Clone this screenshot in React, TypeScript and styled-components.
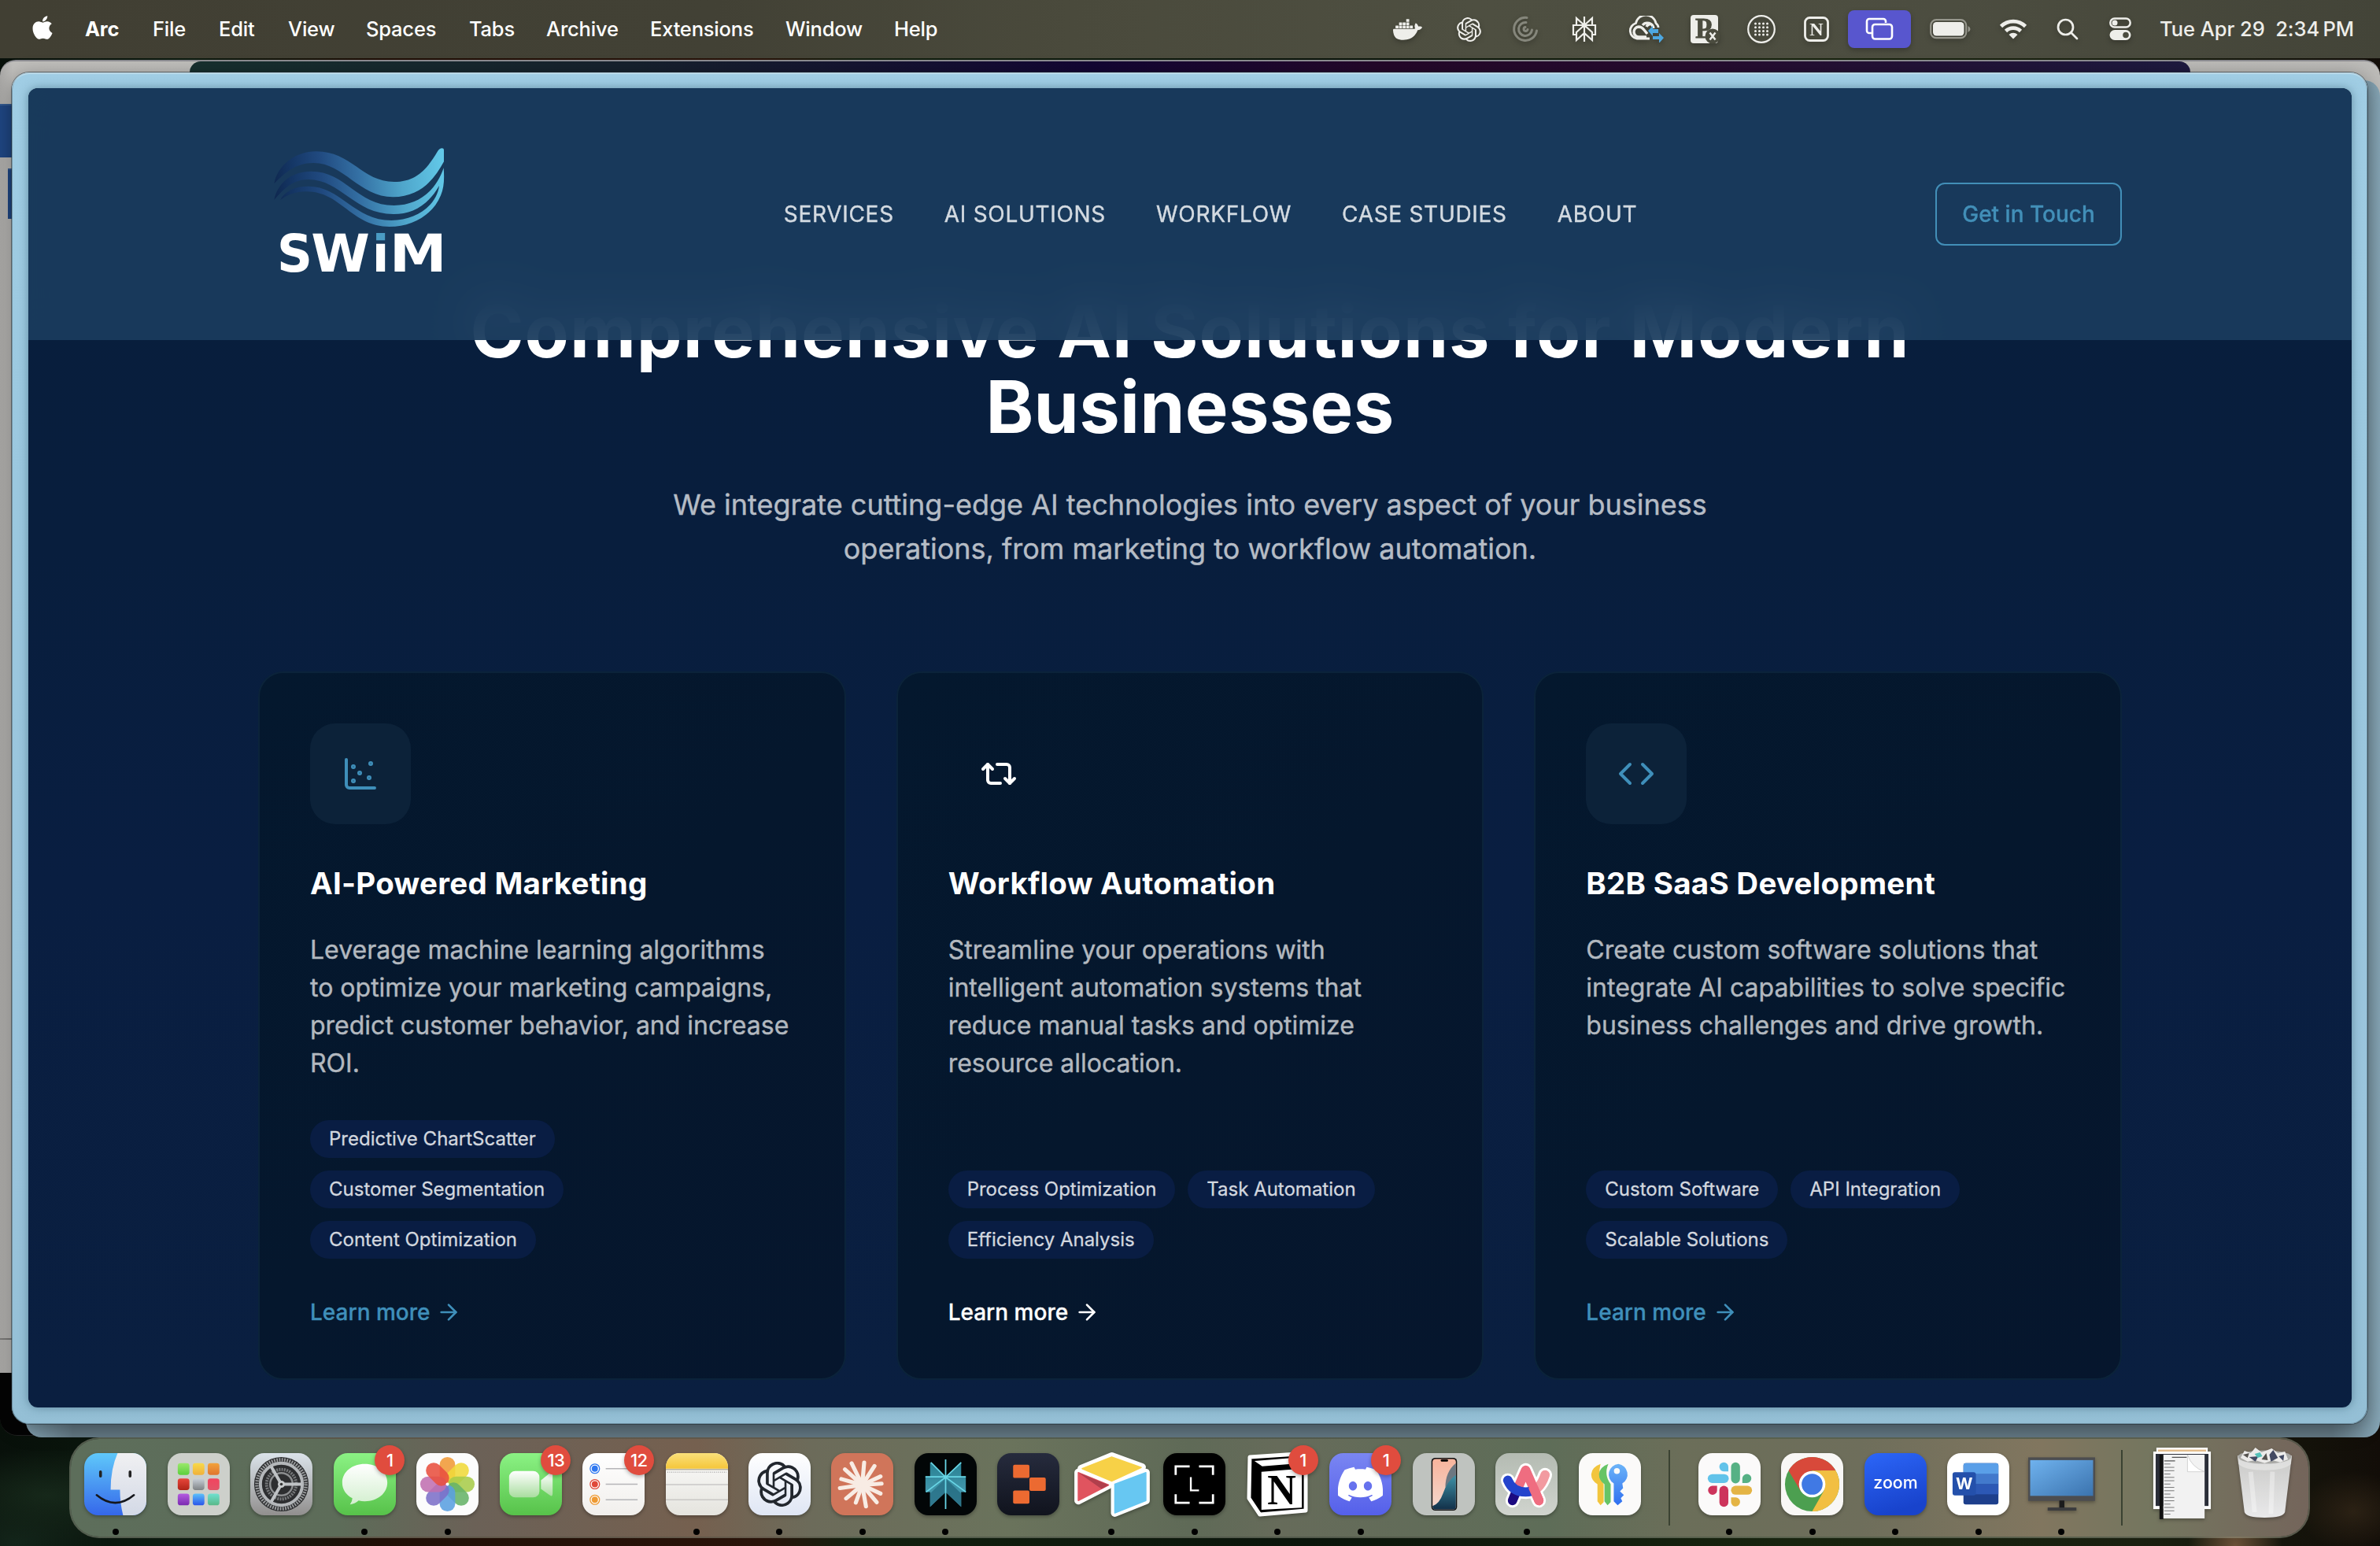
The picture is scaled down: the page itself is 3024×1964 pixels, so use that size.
import React from "react";
import styled, { createGlobalStyle } from "styled-components";
import { ArrowRight, ChartScatter, Code, Repeat2 } from "lucide-react";
import { FaApple } from "react-icons/fa";
import { SiDiscord, SiDocker, SiOpenai } from "react-icons/si";

const Global = createGlobalStyle`
  *, *::before, *::after { box-sizing: border-box; }
  html, body { margin: 0; padding: 0; background: #0b0f0a; }
  body { font-family: Inter, "Liberation Sans", sans-serif; width: 3024px; height: 1964px; overflow: hidden; }
`;

const Desktop = styled.div`
  position: relative;
  width: 3024px;
  height: 1964px;
  overflow: hidden;
  background:
    radial-gradient(ellipse 60px 70px at 2840px 1964px, #6b5138 0%, transparent 100%),
    radial-gradient(ellipse 160px 60px at 60px 1900px, #16281a 0%, transparent 100%),
    radial-gradient(ellipse 120px 60px at 20px 1960px, #13251a 0%, transparent 100%),
    radial-gradient(ellipse 70px 50px at 2990px 1920px, #2b2114 0%, transparent 100%),
    linear-gradient(90deg, #08100a 0%, #0d1c10 8%, #200f06 16%, #2a140a 32%, #12200f 36%, #0b150b 55%, #18240f 75%, #1a2010 90%, #120d08 100%);
`;

const MenuBar = styled.header`
  display: flex;
  align-items: center;
  width: 100%;
  height: 74px;
  padding: 0 33px 0 37px;
  color: #fff;
  background: linear-gradient(90deg, #413f33 0%, #424135 30%, #4a4a3c 45%, #4e4f41 62%, #4c4d40 82%, #434438 100%);
`;

const AppleMark = styled(FaApple)`
  flex: none;
  margin-top: -5px;
`;

const MenuItems = styled.nav`
  display: flex;
  align-items: center;
  gap: 43px;
  margin-left: 37px;
  flex: 1;
`;

const MenuItem = styled.span<{ $w: number; $bold?: boolean }>`
  width: ${(p) => p.$w}px;
  white-space: nowrap;
  font-size: 25.5px;
  line-height: 32px;
  font-weight: ${(p) => (p.$bold ? 700 : 500)};
  letter-spacing: -0.2px;
`;

const Status = styled.div`
  display: flex;
  align-items: center;
  color: #eeeeea;
`;

const StatusSlot = styled.span<{ $w: number }>`
  display: flex;
  align-items: center;
  justify-content: center;
  width: ${(p) => p.$w}px;
  height: 74px;
  filter: drop-shadow(0 3px 3px rgba(0, 0, 0, 0.25));
`;

const ScreenPill = styled.span`
  display: flex;
  align-items: center;
  justify-content: center;
  width: 80px;
  height: 48px;
  border-radius: 8px;
  background: #5856ce;
`;

const Clock = styled.time`
  width: 247px;
  margin-left: 20px;
  white-space: pre;
  font-size: 25.5px;
  line-height: 32px;
  font-weight: 500;
  letter-spacing: -0.05px;
`;

const GreyWindow = styled.div`
  position: absolute;
  left: 0;
  top: 76px;
  width: 3024px;
  height: 1668px;
  border-radius: 20px 20px 0 0;
  border-top: 2px solid #8d8d92;
  background: linear-gradient(90deg, #a9a8a6 0, #c0bfbc 16px, #bdbcb9 100%);
  display: flex;
  justify-content: center;
`;

const GreyTabStrip = styled.div`
  width: 2542px;
  height: 40px;
  border-radius: 14px 14px 0 0;
  background: linear-gradient(90deg, #17302f 0%, #17222e 22%, #130634 45%, #25082a 60%, #270c30 75%, #1e1a40 100%);
`;

const SideMark = styled.div<{ $x: number; $y: number; $h: number }>`
  position: absolute;
  left: ${(p) => p.$x}px;
  top: ${(p) => p.$y}px;
  width: 40px;
  height: ${(p) => p.$h}px;
  background: #1f4683;
  border-top: 2px solid #335a90;
`;

const SideRule = styled.div`
  position: absolute;
  left: 0;
  top: 1700px;
  width: 20px;
  height: 2px;
  background: #7b7a78;
`;

const BlackWindow = styled.div`
  position: absolute;
  left: 0;
  top: 1744px;
  width: 400px;
  height: 80px;
  border-radius: 0 0 0 22px;
  background: #040404;
  border-bottom: 1px solid #222;
`;

const RearWindow = styled.div`
  position: absolute;
  left: 33px;
  top: 102px;
  width: 2991px;
  height: 1724px;
  border-radius: 20px;
  background: linear-gradient(90deg, #86a6b6 0, #667c88 60px, #667c88 2930px, #86a6b6 100%);
`;

const ArcWindow = styled.main`
  position: absolute;
  left: 15px;
  top: 92px;
  width: 2993px;
  height: 1717px;
  padding: 20px 20px 21px 21px;
  border-radius: 22px;
  background: linear-gradient(180deg, #a0cde4 0%, #9bc8df 30%, #9ac4dc 80%, #94bfd5 100%);
  box-shadow: inset 0 2px 1px rgba(220, 240, 250, 0.55), inset 0 0 0 1px rgba(90, 120, 135, 0.7), 0 0 0 1px rgba(30, 40, 45, 0.5), 0 6px 26px rgba(0, 0, 0, 0.4);
`;

const Page = styled.div`
  position: relative;
  width: 2952px;
  height: 1676px;
  border-radius: 12px;
  overflow: hidden;
  background: linear-gradient(180deg, #081e3c 0%, #081e3d 35%, #091e41 60%, #0a1f40 100%);
  box-shadow: 0 0 12px rgba(40, 80, 100, 0.5);
`;

const SiteHeader = styled.div`
  position: absolute;
  z-index: 2;
  left: 0;
  top: 0;
  width: 100%;
  height: 320px;
  padding: 0 292px;
  display: flex;
  align-items: center;
  justify-content: space-between;
  background: rgba(26, 61, 95, 0.91);
  backdrop-filter: blur(28px);
`;

const SiteNav = styled.nav`
  display: flex;
  gap: 64px;
  padding-left: 2px;
`;

const NavLink = styled.a`
  font-size: 28px;
  line-height: 40px;
  letter-spacing: 0.7px;
  color: #d3dae1;
  -webkit-text-stroke: 0.4px currentColor;
  white-space: nowrap;
`;

const TouchButton = styled.button`
  width: 237px;
  height: 80px;
  padding: 0;
  border: 2px solid #428fb8;
  border-radius: 12px;
  background: transparent;
  color: #428fb8;
  font: 500 28px/40px Inter, "Liberation Sans", sans-serif;
  -webkit-text-stroke: 0.3px currentColor;
`;

const Section = styled.section`
  display: flex;
  flex-direction: column;
  align-items: center;
  padding: 261px 292px 0;
`;

const Headline = styled.h2`
  margin: 0;
  text-align: center;
  color: #fff;
  font-size: 92px;
  line-height: 96px;
  font-weight: 700;
`;

const HeadlineRow = styled.span<{ $tracking: number }>`
  display: block;
  white-space: nowrap;
  letter-spacing: ${(p) => p.$tracking}px;
`;

const Lead = styled.p`
  margin: 48px 0 128px;
  width: 1344px;
  text-align: center;
  color: #b5bcc5;
  font-size: 36px;
  line-height: 56px;
  -webkit-text-stroke: 0.4px currentColor;
`;

const Cards = styled.div`
  display: grid;
  grid-template-columns: repeat(3, 1fr);
  gap: 64px;
  width: 100%;
`;

const CardBox = styled.article`
  display: flex;
  flex-direction: column;
  padding: 64px;
  border: 2px solid #0b233a;
  border-radius: 32px;
  background: linear-gradient(135deg, #04182e 0%, #05172d 50%, #06162d 100%);
`;

const IconTile = styled.div<{ $plain?: boolean }>`
  display: flex;
  align-items: center;
  justify-content: center;
  width: 128px;
  height: 128px;
  border-radius: 32px;
  background: ${(p) => (p.$plain ? "transparent" : "#0c2239")};
  color: ${(p) => (p.$plain ? "#fff" : "#3f8fba")};
`;

const CardTitle = styled.h3`
  margin: 47px 0 33px;
  color: #fff;
  font-size: 38.5px;
  line-height: 56px;
  font-weight: 700;
  letter-spacing: 0.27px;
  white-space: nowrap;
`;

const CardText = styled.p`
  margin: 0 0 48px;
  color: #b2b8bf;
  font-size: 32px;
  line-height: 48px;
  -webkit-text-stroke: 0.4px currentColor;
`;

const Tags = styled.div`
  display: flex;
  flex-wrap: wrap;
  gap: 16px;
  margin-top: auto;
  margin-bottom: 48px;
`;

const Tag = styled.span`
  height: 48px;
  padding: 8px 24px;
  border-radius: 24px;
  background: #091d43;
  color: #d2d7df;
  font-size: 24px;
  line-height: 32px;
  white-space: nowrap;
  -webkit-text-stroke: 0.3px currentColor;
`;

const LearnMore = styled.a<{ $plain?: boolean }>`
  display: flex;
  align-items: center;
  gap: 8px;
  color: ${(p) => (p.$plain ? "#fff" : "#3f8fba")};
  font-size: 28px;
  line-height: 40px;
  font-weight: 500;
  -webkit-text-stroke: 0.3px currentColor;
`;

const Dock = styled.footer`
  position: absolute;
  left: 88px;
  top: 1826px;
  width: 2847px;
  height: 128px;
  padding-left: 4px;
  display: flex;
  border: 2px solid rgba(170, 175, 155, 0.45);
  border-radius: 38px;
  background-image: linear-gradient(90deg, #5d6e5b 0%, #5d6c59 12%, #6b6157 18%, #75604f 28%, #6c6b5a 33%, #6a735c 42%, #5f6a57 50%, #666b5a 54%, #5e6d58 66%, #6b6e59 72%, #6e6e5b 80%, #81765f 88%, #74765f 93%, #74655b 100%);
  background-clip: padding-box;
`;

const DockSlot = styled.div`
  position: relative;
  display: flex;
  flex-direction: column;
  align-items: center;
  justify-content: space-between;
  width: 105.48px;
  padding: 18px 0 2px;
  flex: none;
`;

const AppArt = styled.svg`
  width: 79px;
  height: 79px;
  overflow: visible;
  filter: drop-shadow(0 2px 2px rgba(0, 0, 0, 0.3));
`;

const RunDot = styled.i`
  width: 8px;
  height: 8px;
  border-radius: 50%;
  background: #000;
`;

const Badge = styled.b`
  position: absolute;
  left: 66px;
  top: 8px;
  width: 38px;
  height: 38px;
  border-radius: 50%;
  background: #e04c3e;
  color: #fff;
  text-align: center;
  font-size: 22px;
  line-height: 38px;
  font-weight: 500;
  letter-spacing: -0.5px;
  box-shadow: 0 2px 5px rgba(0, 0, 0, 0.3);
`;

const DockDivider = styled.span<{ $w: number }>`
  display: flex;
  justify-content: center;
  flex: none;
  width: ${(p) => p.$w}px;
  &::before {
    content: "";
    width: 2px;
    height: 96px;
    margin-top: 14px;
    background: #3a4232;
  }
`;

/* ---------- logo ---------- */

const SwimLogo = () => (
  <svg width="287" height="200" viewBox="84 36 861 600">
    <defs>
      <linearGradient id="wave" gradientUnits="userSpaceOnUse" x1="145" y1="230" x2="790" y2="160">
        <stop offset="0" stopColor="#0f2850" />
        <stop offset="0.12" stopColor="#153766" />
        <stop offset="0.28" stopColor="#20497f" />
        <stop offset="0.5" stopColor="#3470a4" />
        <stop offset="0.75" stopColor="#4fa6cb" />
        <stop offset="1" stopColor="#62c8e8" />
      </linearGradient>
      <linearGradient id="idot" gradientUnits="userSpaceOnUse" x1="0" y1="400" x2="0" y2="560">
        <stop offset="0.27" stopColor="#4a9cc4" />
        <stop offset="0.27" stopColor="#fff" />
      </linearGradient>
    </defs>
    <g fill="url(#wave)">
      <path d="M145 220C158 150 225 97 305 97C440 97 480 213 602 213C690 213 730 160 768 97C776 82 792 82 792 92V136C755 205 700 271 598 271C470 271 410 141 295 141C225 141 185 180 145 220Z" />
      <path d="M145 282C158 215 215 173 285 173C420 173 460 303 602 303C700 303 765 240 791 160C794 200 793 235 780 265C750 340 670 384 585 384C440 384 400 250 268 250C225 250 195 262 168 283C185 248 225 230 275 230C400 230 450 360 592 360C690 360 765 300 774 228C730 305 670 336 600 336C450 336 400 204 275 204C215 204 180 242 145 282Z" />
    </g>
    <g fontFamily="'DejaVu Sans', sans-serif" fontWeight="700" fontSize="199" fill="#fff">
      <text x="156" y="555" textLength="135" lengthAdjust="spacingAndGlyphs">S</text>
      <text x="286" y="555" textLength="224" lengthAdjust="spacingAndGlyphs">W</text>
      <text x="518" y="555" fontSize="190" fill="url(#idot)">i</text>
      <text x="584" y="555" textLength="219" lengthAdjust="spacingAndGlyphs">M</text>
    </g>
  </svg>
);

/* ---------- menu bar glyphs ---------- */

const PerplexityGlyph = () => (
  <svg width="32" height="34" viewBox="0 0 32 34" fill="none" stroke="currentColor" strokeWidth="2.2">
    <path d="M16 1v32M6 3l10 9L26 3v9H6zM6 12H2v12h4M26 12h4v12h-4M16 12L6 21v10l10-9 10 9V21z" />
  </svg>
);

const SwirlGlyph = () => (
  <svg width="34" height="34" viewBox="0 0 34 34" fill="none" stroke="#85867b" strokeWidth="3" strokeLinecap="round">
    <path d="M19 2.500A14.500 14.500 0 1 0 31.500 19M18 8.500A8.500 8.500 0 1 0 25.500 18" />
    <path d="M17 14.500a2.500 2.500 0 1 0 3 3" />
  </svg>
);

const CloudGlyph = () => (
  <svg width="48" height="34" viewBox="0 0 48 34" fill="none" stroke="currentColor" strokeWidth="2.800">
    <path d="M28 29H12A10 10 0 0 1 10.500 9.500A13 13 0 0 1 36 9.500Q39 12 39 15" />
    <path d="M24 27H15a6.500 6.500 0 0 1-1-13q4 0 7 4l4 5M19 12a8 8 0 0 1 14 4M24 14a5 5 0 0 1 4-3" strokeWidth="3.400" />
    <path d="M26 19l6-6v4h7v5h-7v4zM46 28l-6-6v4h-8v4h8v5z" fill="#4da7e0" stroke="none" />
  </svg>
);

const PGlyph = () => (
  <svg width="38" height="38" viewBox="0 0 38 38">
    <rect x="1" y="1" width="35" height="36" rx="4" fill="currentColor" />
    <text x="7" y="30" fontFamily="'Liberation Serif', serif" fontWeight="700" fontSize="35" fill="#4b4c3f" stroke="#4b4c3f" strokeWidth="0.800">P</text>
    <circle cx="29" cy="28" r="9.500" fill="#4b4c3f" />
    <path d="M25.500 23.500l7 9M32.500 23.500l-7 9" stroke="currentColor" strokeWidth="2.500" />
  </svg>
);

const GridGlyph = () => (
  <svg width="38" height="38" viewBox="0 0 38 38">
    <circle cx="19" cy="19" r="16.800" fill="none" stroke="currentColor" strokeWidth="2.200" />
    {[11.5, 16.5, 21.5, 26.5].map((x) =>
      [12, 16.8, 21.5, 26].map((y) => <circle key={`${x}-${y}`} cx={x} cy={y} r="1.500" fill="currentColor" />),
    )}
  </svg>
);

const NGlyph = () => (
  <svg width="34" height="34" viewBox="0 0 34 34">
    <rect x="2.500" y="2.500" width="29" height="29" rx="6" fill="none" stroke="currentColor" strokeWidth="2.800" />
    <text x="17" y="25" textAnchor="middle" fontFamily="'Liberation Serif', serif" fontWeight="700" fontSize="24" fill="currentColor">N</text>
  </svg>
);

const ScreensGlyph = () => (
  <svg width="36" height="30" viewBox="0 0 36 30" fill="none" stroke="#fff" strokeWidth="2.600">
    <path d="M8 20H5a3 3 0 0 1-3-3V5a3 3 0 0 1 3-3h18a3 3 0 0 1 3 3v2" />
    <rect x="9" y="9" width="25" height="18.500" rx="3.500" />
  </svg>
);

const BatteryGlyph = () => (
  <svg width="52" height="26" viewBox="0 0 52 26">
    <rect x="1.200" y="1.200" width="45" height="23" rx="7" fill="none" stroke="#96968c" strokeWidth="2.200" />
    <rect x="4" y="4" width="39.500" height="17.500" rx="4.500" fill="currentColor" />
    <path d="M48.500 9q3 1.500 3 4t-3 4z" fill="#96968c" />
  </svg>
);

const WifiGlyph = () => (
  <svg width="36" height="28" viewBox="0 0 36 28" fill="none" stroke="currentColor" strokeWidth="4.600">
    <path d="M2.500 10.500a22 22 0 0 1 31 0M8.500 16.500a13.500 13.500 0 0 1 19 0" />
    <path d="M18 26.500l-5.500-5.600a8 8 0 0 1 11 0z" fill="currentColor" stroke="none" />
  </svg>
);

const SearchGlyph = () => (
  <svg width="28" height="28" viewBox="0 0 28 28" fill="none" stroke="currentColor" strokeWidth="2.700" strokeLinecap="round">
    <circle cx="11.500" cy="11.500" r="9.500" />
    <path d="M18.500 18.500l7.500 7.500" />
  </svg>
);

const ControlGlyph = () => (
  <svg width="28" height="30" viewBox="0 0 28 30">
    <rect x="1.300" y="1.600" width="25.400" height="10.800" rx="5.400" fill="none" stroke="currentColor" strokeWidth="2.500" />
    <circle cx="7" cy="7" r="3.500" fill="currentColor" />
    <rect x="0.500" y="16" width="27" height="13" rx="6.500" fill="currentColor" />
    <circle cx="21" cy="22.500" r="3.800" fill="#4b4c3f" />
  </svg>
);

/* ---------- dock artwork, drawn on an 80 × 80 grid ---------- */

const Tile = ({ fill }: { fill: string }) => <rect width="80" height="80" rx="18" fill={fill} />;

const Grad = ({ id, a, b, x2 = 0, y2 = 1 }: { id: string; a: string; b: string; x2?: number; y2?: number }) => (
  <linearGradient id={id} x1="0" y1="0" x2={x2} y2={y2}>
    <stop offset="0" stopColor={a} />
    <stop offset="1" stopColor={b} />
  </linearGradient>
);

const Finder = () => (
  <>
    <Grad id="fi1" a="#5fc8fa" b="#3567ea" />
    <Grad id="fi2" a="#f0f0f2" b="#d3d9e6" />
    <Tile fill="url(#fi1)" />
    <path d="M43 0H62A18 18 0 0 1 80 18V62A18 18 0 0 1 62 80H50Q46 64 46 47H34Q34 20 43 0Z" fill="url(#fi2)" />
    <path d="M21 24v5.500M59 24v5.500" stroke="#222" strokeWidth="3.600" strokeLinecap="round" />
    <path d="M16 54Q40 74 64 54" fill="none" stroke="#15171c" strokeWidth="2.600" strokeLinecap="round" />
  </>
);

const padColors = [
  ["#9be86c", "#5ccf3d"], ["#f8d94a", "#f0b13a"], ["#f2a23a", "#e0752f"],
  ["#e8463a", "#b02418"], ["#c9d0d8", "#7e8285"], ["#f2445f", "#e25468"],
  ["#b45ce0", "#7a2ab0"], ["#5cc0fa", "#2a55ea"], ["#6fe0cf", "#58b888"],
];
const Launchpad = () => (
  <>
    <Tile fill="#cdd0cb" />
    {padColors.map(([a, b], i) => (
      <g key={a}>
        <Grad id={`lp${i}`} a={a} b={b} />
        <rect x={13 + (i % 3) * 19.3} y={13 + Math.floor(i / 3) * 19.6} width="15" height="15" rx="3.500" fill={`url(#lp${i})`} />
      </g>
    ))}
  </>
);

const Settings = () => (
  <>
    <Grad id="se" a="#dbe3ea" b="#918f8e" />
    <Tile fill="url(#se)" />
    <circle cx="40" cy="40" r="35" fill="#2d2e30" />
    <circle cx="40" cy="40" r="31.500" fill="none" stroke="#9b9d9f" strokeWidth="4.500" strokeDasharray="1.800 1.500" />
    <circle cx="40" cy="40" r="27" fill="none" stroke="#b4b7ba" strokeWidth="4" />
    <circle cx="40" cy="40" r="19" fill="none" stroke="#77797b" strokeWidth="4" strokeDasharray="2 1.300" />
    <circle cx="40" cy="40" r="14.500" fill="none" stroke="#8b8d8f" strokeWidth="2.500" />
    <path d="M40 40H66M40 40L27 17.500M40 40L27 62.500" stroke="#bfc2c5" strokeWidth="4" />
    <circle cx="40" cy="40" r="4.500" fill="#c8cbcd" />
    <circle cx="40" cy="40" r="1.800" fill="#333" />
  </>
);

const Messages = () => (
  <>
    <Grad id="ms" a="#8bf284" b="#57c24a" />
    <Grad id="ms2" a="#ffffff" b="#d3efcf" />
    <Tile fill="url(#ms)" />
    <path d="M40 14C56 14 69 24 69 38S56 62 40 62Q36 62 32 61Q28 65 21 66Q24 62 24 58C16 54 11 47 11 38C11 24 24 14 40 14Z" fill="url(#ms2)" />
  </>
);

const petals = ["#f09a37", "#f0d93a", "#a9cc4a", "#67b368", "#5a9fe0", "#7c70c8", "#c070b0", "#e8503f"];
const Photos = () => (
  <>
    <Tile fill="#fcfcfc" />
    {petals.map((c, i) => (
      <rect key={c} x="30" y="5" width="20" height="34" rx="10" fill={c} fillOpacity="0.88" transform={`rotate(${i * 45} 40 40)`} />
    ))}
    <circle cx="40" cy="40" r="2" fill="#fff" />
  </>
);

const FaceTime = () => (
  <>
    <Grad id="ft" a="#8bf284" b="#57c24a" />
    <Grad id="ft2" a="#ffffff" b="#a9dd9f" />
    <Tile fill="url(#ft)" />
    <rect x="12" y="23" width="39" height="34" rx="8" fill="url(#ft2)" />
    <path d="M53 35L64 26Q68 24 68 29V52Q68 57 64 54L53 46Z" fill="url(#ft2)" />
  </>
);

const Reminders = () => (
  <>
    <Grad id="re" a="#ffffff" b="#f1efec" />
    <Tile fill="url(#re)" />
    {["#2f78f0", "#e0483a", "#ee9a33"].map((c, i) => (
      <g key={c}>
        <circle cx="16" cy={20 + i * 20} r="6" fill="#fff" stroke={c} strokeWidth="1.300" />
        <circle cx="16" cy={20 + i * 20} r="4" fill={c} />
        <path d={`M30 ${20 + i * 20}H71`} stroke="#b5b5b8" strokeWidth="1.500" />
      </g>
    ))}
  </>
);

const Notes = () => (
  <>
    <Grad id="no" a="#fbfbfa" b="#e5e4de" />
    <Grad id="no2" a="#fae07a" b="#f5c63a" />
    <Tile fill="url(#no)" />
    <path d="M0 20V18A18 18 0 0 1 18 0H62A18 18 0 0 1 80 18V20Z" fill="url(#no2)" />
    <path d="M0 21H80" stroke="#b9b3a0" strokeWidth="1.600" />
    <path d="M2 24.500H78" stroke="#aaa" strokeWidth="1.500" strokeDasharray="1 1.600" />
    <path d="M0 40.500H80M0 60H80" stroke="#c9c8c6" strokeWidth="1.400" />
  </>
);

const ChatGpt = () => (
  <>
    <Grad id="cg" a="#ffffff" b="#dfe6f4" />
    <Tile fill="url(#cg)" />
    <SiOpenai x="11" y="11" size={58} color="#22272e" />
  </>
);

const claudeRays = [
  [25, -4], [26, 25], [29, 50], [28, 80], [24, 110], [27, 140], [29, 172], [28, 196], [30, 222], [31, 244], [29, 275], [29, 303], [26, 335],
];
const Claude = () => (
  <>
    <Tile fill="#d0755a" />
    <g stroke="#f8ece4" strokeWidth="5.200" strokeLinecap="round">
      {claudeRays.map(([r, a]) => (
        <path
          key={a}
          d={`M40 41L${40 + r * Math.cos((a * Math.PI) / 180)} ${41 + r * Math.sin((a * Math.PI) / 180)}`}
        />
      ))}
    </g>
  </>
);

const Perplexity = () => (
  <>
    <Grad id="px" a="#2c8ea2" b="#5ab4cc" />
    <Tile fill="#020607" />
    <path d="M20 12L40 31L60 12V30H66V50H60V69L40 50L20 69V50H14V30H20Z" fill="url(#px)" fillOpacity="0.9" />
    <path d="M40 33V50L20 69V52Z" fill="#286f86" fillOpacity="0.8" />
    <path d="M40 33V50L60 69V52Z" fill="#246a80" fillOpacity="0.8" />
    <path d="M40 8V72M14 30.500H66M21 12L40 31L60 12M15 50L40 31L66 50" fill="none" stroke="#68d6e6" strokeWidth="1.800" />
  </>
);

const Replit = () => (
  <>
    <Grad id="rp" a="#262b3d" b="#10131d" />
    <Tile fill="url(#rp)" />
    <rect x="20.500" y="15" width="21" height="17" rx="2" fill="#ec6a31" />
    <rect x="41.500" y="31.500" width="21" height="17" rx="2" fill="#ec6a31" />
    <rect x="20.500" y="48" width="21" height="17" rx="2" fill="#ec6a31" />
  </>
);

const Airtable = () => (
  <>
    <g fill="#fff" stroke="#fff" strokeWidth="10" strokeLinejoin="round">
      <path d="M40 4L79 18L40 36L1 20Z" />
      <path d="M-3 25L36 41L-3 61Z" />
      <path d="M84 25V61L44 77V40Z" />
    </g>
    <g strokeLinejoin="round" strokeWidth="1.500">
      <path d="M40 5L78 18.500L40 36L2 20Z" fill="#f7d147" stroke="#f7d147" />
      <path d="M-3 25L36 41L-3 61Z" fill="#e0545f" stroke="#e0545f" />
      <path d="M-3 25L36 41L27 46Z" fill="#b03f4c" />
      <path d="M84 25V61L44 77V40Z" fill="#67c7f2" stroke="#67c7f2" />
    </g>
  </>
);

const Linear = () => (
  <>
    <Tile fill="#000" />
    <path d="M16 28V17H34M46 17H64V28M64 53V64H46M34 64H16V53" fill="none" stroke="#fff" strokeWidth="2.800" />
    <path d="M35.500 31V48H46" fill="none" stroke="#fff" strokeWidth="2.400" />
  </>
);

const NotionApp = () => (
  <>
    <path d="M4 5L66 1L76 6V74L17 79L3 58Z" fill="#000" stroke="#fff" strokeWidth="5" strokeLinejoin="round" />
    <path d="M10 10L60 6L70 13L20 17Z" fill="#fff" />
    <path d="M19 24L71 20V70L19 73Z" fill="#fff" />
    <text x="45" y="66" textAnchor="middle" fontFamily="'Liberation Serif', serif" fontWeight="700" fontSize="55" fill="#000" textLength="37" lengthAdjust="spacingAndGlyphs">N</text>
  </>
);

const Discord = () => (
  <>
    <Grad id="di" a="#7a86f2" b="#5560ea" />
    <Tile fill="url(#di)" />
    <SiDiscord x="11" y="11" size={58} color="#fff" />
  </>
);

const Phone = () => (
  <>
    <Grad id="ph" a="#f8b49c" b="#f3d8ce" />
    <Grad id="ph2" a="#3f93a8" b="#123049" />
    <Tile fill="#bfc3bf" />
    <rect x="24" y="6" width="33" height="68" rx="5" fill="#111" />
    <rect x="25.500" y="7.500" width="30" height="65" rx="4" fill="url(#ph)" />
    <path d="M55.500 13Q42 24 42 44L55.500 30Z" fill="#6c7781" />
    <path d="M55.500 28Q44 36 39 52Q34 66 25.500 68V69Q26 72.500 29 72.500H52Q55.500 72.500 55.500 69Z" fill="url(#ph2)" />
    <rect x="36" y="8" width="9.500" height="3" rx="1.500" fill="#000" />
  </>
);

const arcLegs = "M22 61L39 22L56 61";
const arcBow = "M16 35Q22 50 39 50Q57 49 64 28";
const ArcApp = () => (
  <>
    <Grad id="ar" a="#b4bbb2" b="#d0d4ce" />
    <Tile fill="url(#ar)" />
    <g fill="none" strokeLinecap="round" strokeLinejoin="round">
      <path d={arcLegs} stroke="#fff" strokeWidth="18" />
      <path d={arcBow} stroke="#fff" strokeWidth="18" />
      <path d="M64 28Q60 40 54 45" stroke="#f29aa0" strokeWidth="12" />
      <path d="M29 45L39 22L56 61" stroke="#ef6d80" strokeWidth="12" />
      <path d="M22 61L27 49" stroke="#1c0a80" strokeWidth="12" />
      <path d="M16 35Q22 50 39 50Q43 50 46 49" stroke="#2444cc" strokeWidth="12" />
      <path d="M49 45L56 61" stroke="#ef6d80" strokeWidth="12" />
    </g>
  </>
);

const Keys = () => (
  <>
    <Grad id="ke" a="#6cb4f8" b="#2f6ff0" />
    <Tile fill="#fbfaf9" />
    <path d="M28 14Q17 18 16 27Q16 35 24 40V62L28 67L32 63V40Q24 28 28 14Z" fill="#f2c53d" />
    <path d="M38 14Q27 18 26 27Q26 35 33 40V62L37 67L41 63V40Q32 28 38 14Z" fill="#66c466" />
    <path d="M51 14A13.500 13.500 0 0 1 56 39L57 45L53 49L58 54L54 58L56 62L50 67L45 62V39A13.500 13.500 0 0 1 51 14Z" fill="url(#ke)" />
    <circle cx="49" cy="23" r="3.800" fill="#fbfaf9" />
  </>
);

const Slack = () => (
  <>
    <Tile fill="#fbfafa" />
    <rect x="12" y="27" width="27" height="11.500" rx="5.800" fill="#62c3ea" />
    <path d="M38.500 23.500H32.500A5.800 5.800 0 1 1 38.500 17.700Z" fill="#62c3ea" />
    <rect x="42" y="12" width="11.500" height="27" rx="5.800" fill="#56b185" />
    <path d="M56.500 38.500V32.500A5.800 5.800 0 1 1 62.300 38.500Z" fill="#56b185" />
    <rect x="27" y="42" width="11.500" height="27" rx="5.800" fill="#cd345c" />
    <path d="M24 42V48A5.800 5.800 0 1 1 18 42Z" fill="#cd345c" />
    <rect x="42" y="42" width="27" height="11.500" rx="5.800" fill="#e4b445" />
    <path d="M42 57H48A5.800 5.800 0 1 1 42 63Z" fill="#e4b445" />
  </>
);

const Chrome = () => (
  <>
    <Tile fill="#f8f7f5" />
    <circle cx="40" cy="40" r="35" fill="#4c9f50" />
    <path d="M9.700 22.500A35 35 0 0 1 70.300 22.500H40Q28 24 25 48.500Z" fill="#d8493a" />
    <path d="M70.300 22.500A35 35 0 0 1 40 75L55 48.500Q60 36 51 22.500Z" fill="#f2bf42" />
    <path d="M40 22.500H70.300L55 48.500Z" fill="#f2bf42" />
    <circle cx="40" cy="40" r="17" fill="#fff" />
    <circle cx="40" cy="40" r="13.500" fill="#4079e4" />
  </>
);

const Zoom = () => (
  <>
    <Grad id="zo" a="#2c66f8" b="#1843cc" x2={0.3} />
    <Tile fill="url(#zo)" />
    <text x="40" y="46" textAnchor="middle" fontFamily="Inter, sans-serif" fontWeight="500" fontSize="22" fill="#fff" textLength="57" lengthAdjust="spacingAndGlyphs">zoom</text>
  </>
);

const Word = () => (
  <>
    <Tile fill="#fff" />
    <rect x="21" y="13" width="45" height="53" rx="3" fill="#1d3f8c" />
    <path d="M21 27V16Q21 13 24 13H63Q66 13 66 16V27Z" fill="#5a9fe8" />
    <rect x="21" y="27" width="45" height="13" fill="#4279cc" />
    <rect x="21" y="40" width="45" height="13" fill="#2c58b5" />
    <rect x="7" y="24.500" width="30" height="30" rx="3" fill="#2450ab" />
    <text x="22" y="47" textAnchor="middle" fontFamily="Inter, sans-serif" fontWeight="700" fontSize="21" fill="#fff">W</text>
  </>
);

const Display = () => (
  <>
    <Grad id="ds" a="#6fb2ee" b="#3b73ae" x2={1} />
    <rect x="-3" y="5.500" width="86" height="56" fill="#4c4d50" />
    <rect x="-0.500" y="9" width="81" height="46" fill="url(#ds)" />
    <rect x="37" y="61" width="6.500" height="10" fill="#1b1b1c" />
    <rect x="22" y="70" width="37" height="4" fill="#3b3c3e" />
  </>
);

const Papers = () => (
  <>
    <rect x="7" y="-7" width="66" height="20" fill="#fff" />
    <rect x="9" y="-4.500" width="62" height="10" fill="#e4bd8c" />
    <rect x="3" y="-2" width="74" height="74" fill="#fff" />
    <rect x="6" y="1" width="68" height="67" fill="#2a2e38" />
    <rect x="11" y="2" width="5" height="83" fill="#111" />
    <rect x="16" y="2" width="53" height="82" fill="#f2f2f2" />
    <path d="M27 5.500H46M17 10H31" stroke="#555" strokeWidth="1.200" />
    {Array.from({ length: 16 }, (_, i) => (
      <path key={i} d={`M17 ${14 + i * 4.3}h${i % 3 ? 13 : 8}`} stroke="#777" strokeWidth="1" />
    ))}
    <path d="M47 2V24H69Q52 18 47 2Z" fill="#fff" stroke="#c8c8c8" strokeWidth="0.800" />
  </>
);

const Trash = () => (
  <>
    <Grad id="tr" a="#c9c9c7" b="#e9e9ea" />
    <path d="M5 3L14 76Q16 83 40 83T66 76L75 3Z" fill="url(#tr)" />
    <ellipse cx="40" cy="5" rx="35" ry="8.500" fill="#a9a9a6" />
    <path d="M9 6L14-3L22 0L28-7L36-1L44-4L49-6L57 0L66-2L70 8L60 12L50 9L40 13L28 9L18 11Z" fill="#ecebea" />
    <path d="M20 5l8 6 4-7zM46 2l5-6 6 10-9 5zM58 4l6 6 1-8z" fill="#434a63" />
    <path d="M27 1l7-2 3 5-6 2z" fill="#54c0b8" />
    <path d="M12 2l6 4 2-6zM36 8l6-8 2 9z" fill="#55524f" />
    <path d="M5 3Q8 14 40 14T75 3L74 14Q66 22 40 22T6 14Z" fill="#fff" fillOpacity="0.35" />
    <path d="M22 24L27 76M50 24L48 78" stroke="#fff" strokeOpacity="0.35" strokeWidth="6" />
  </>
);

type App = { name: string; art: React.FC; badge?: string; running?: boolean };

const mainApps: App[] = [
  { name: "finder", art: Finder, running: true },
  { name: "launchpad", art: Launchpad },
  { name: "settings", art: Settings },
  { name: "messages", art: Messages, badge: "1", running: true },
  { name: "photos", art: Photos, running: true },
  { name: "facetime", art: FaceTime, badge: "13" },
  { name: "reminders", art: Reminders, badge: "12" },
  { name: "notes", art: Notes, running: true },
  { name: "chatgpt", art: ChatGpt, running: true },
  { name: "claude", art: Claude, running: true },
  { name: "perplexity", art: Perplexity, running: true },
  { name: "replit", art: Replit },
  { name: "airtable", art: Airtable, running: true },
  { name: "l", art: Linear, running: true },
  { name: "notion", art: NotionApp, badge: "1", running: true },
  { name: "discord", art: Discord, badge: "1", running: true },
  { name: "phone", art: Phone },
  { name: "arc", art: ArcApp, running: true },
  { name: "keys", art: Keys },
];
const recentApps: App[] = [
  { name: "slack", art: Slack, running: true },
  { name: "chrome", art: Chrome, running: true },
  { name: "zoom", art: Zoom, running: true },
  { name: "word", art: Word, running: true },
  { name: "display", art: Display, running: true },
];
const stacks: App[] = [
  { name: "papers", art: Papers },
  { name: "trash", art: Trash },
];

const DockApp = ({ app }: { app: App }) => {
  const Art = app.art;
  return (
    <DockSlot>
      <AppArt viewBox="0 0 80 80">
        <Art />
      </AppArt>
      {app.running && <RunDot />}
      {app.badge && <Badge>{app.badge}</Badge>}
    </DockSlot>
  );
};

/* ---------- content ---------- */

const menu: { label: string; w: number; bold?: boolean }[] = [
  { label: "Arc", w: 43, bold: true },
  { label: "File", w: 41 },
  { label: "Edit", w: 45 },
  { label: "View", w: 56 },
  { label: "Spaces", w: 88 },
  { label: "Tabs", w: 55 },
  { label: "Archive", w: 89 },
  { label: "Extensions", w: 129 },
  { label: "Window", w: 95 },
  { label: "Help", w: 54 },
];

const cards = [
  {
    title: "AI-Powered Marketing",
    icon: ChartScatter,
    text: "Leverage machine learning algorithms to optimize your marketing campaigns, predict customer behavior, and increase ROI.",
    tags: ["Predictive ChartScatter", "Customer Segmentation", "Content Optimization"],
  },
  {
    title: "Workflow Automation",
    icon: Repeat2,
    plain: true,
    text: "Streamline your operations with intelligent automation systems that reduce manual tasks and optimize resource allocation.",
    tags: ["Process Optimization", "Task Automation", "Efficiency Analysis"],
  },
  {
    title: "B2B SaaS Development",
    icon: Code,
    text: "Create custom software solutions that integrate AI capabilities to solve specific business challenges and drive growth.",
    tags: ["Custom Software", "API Integration", "Scalable Solutions"],
  },
];

export default function App() {
  return (
    <>
      <Global />
      <Desktop>
        <MenuBar>
          <AppleMark size={34} />
          <MenuItems>
            {menu.map((m) => (
              <MenuItem key={m.label} $w={m.w} $bold={m.bold}>
                {m.label}
              </MenuItem>
            ))}
          </MenuItems>
          <Status>
            <StatusSlot $w={72}><SiDocker size={37} /></StatusSlot>
            <StatusSlot $w={85}><SiOpenai size={31} /></StatusSlot>
            <StatusSlot $w={58}><SwirlGlyph /></StatusSlot>
            <StatusSlot $w={92}><PerplexityGlyph /></StatusSlot>
            <StatusSlot $w={66}><CloudGlyph /></StatusSlot>
            <StatusSlot $w={82}><PGlyph /></StatusSlot>
            <StatusSlot $w={62}><GridGlyph /></StatusSlot>
            <StatusSlot $w={78}><NGlyph /></StatusSlot>
            <StatusSlot $w={82}><ScreenPill><ScreensGlyph /></ScreenPill></StatusSlot>
            <StatusSlot $w={97}><BatteryGlyph /></StatusSlot>
            <StatusSlot $w={64}><WifiGlyph /></StatusSlot>
            <StatusSlot $w={74}><SearchGlyph /></StatusSlot>
            <StatusSlot $w={60}><ControlGlyph /></StatusSlot>
            <Clock>{"Tue Apr 29  2:34\u2009PM"}</Clock>
          </Status>
        </MenuBar>

        <GreyWindow>
          <GreyTabStrip />
        </GreyWindow>
        <SideMark $x={0} $y={132} $h={68} />
        <SideMark $x={10} $y={214} $h={64} />
        <SideRule />
        <BlackWindow />
        <RearWindow />

        <ArcWindow>
          <Page>
            <SiteHeader>
              <SwimLogo />
              <SiteNav>
                {["SERVICES", "AI SOLUTIONS", "WORKFLOW", "CASE STUDIES", "ABOUT"].map((t) => (
                  <NavLink key={t}>{t}</NavLink>
                ))}
              </SiteNav>
              <TouchButton>Get in Touch</TouchButton>
            </SiteHeader>
            <Section>
              <Headline>
                <HeadlineRow $tracking={0.95}>Comprehensive AI Solutions for Modern</HeadlineRow>
                <HeadlineRow $tracking={0.3}>Businesses</HeadlineRow>
              </Headline>
              <Lead>
                We integrate cutting-edge AI technologies into every aspect of your business operations, from
                marketing to workflow automation.
              </Lead>
              <Cards>
                {cards.map((c) => (
                  <CardBox key={c.title}>
                    <IconTile $plain={c.plain}>
                      <c.icon size={48} strokeWidth={2} />
                    </IconTile>
                    <CardTitle>{c.title}</CardTitle>
                    <CardText>{c.text}</CardText>
                    <Tags>
                      {c.tags.map((t) => (
                        <Tag key={t}>{t}</Tag>
                      ))}
                    </Tags>
                    <LearnMore $plain={c.plain}>
                      Learn more <ArrowRight size={32} strokeWidth={2} />
                    </LearnMore>
                  </CardBox>
                ))}
              </Cards>
            </Section>
          </Page>
        </ArcWindow>

        <Dock>
          {mainApps.map((a) => <DockApp key={a.name} app={a} />)}
          <DockDivider $w={46.5} />
          {recentApps.map((a) => <DockApp key={a.name} app={a} />)}
          <DockDivider $w={48} />
          {stacks.map((a) => <DockApp key={a.name} app={a} />)}
        </Dock>
      </Desktop>
    </>
  );
}
